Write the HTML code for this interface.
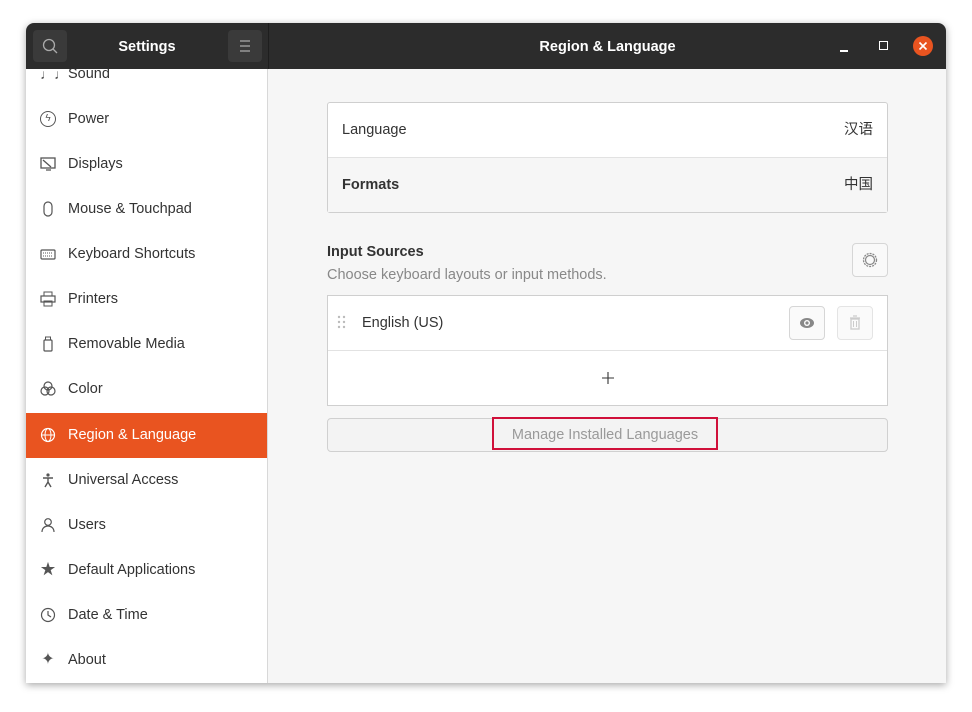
<!DOCTYPE html>
<html><head><meta charset="utf-8"><style>
*{box-sizing:border-box;margin:0;padding:0}
body{width:972px;height:712px;background:#fff;font-family:"Liberation Sans","Noto Sans CJK SC",sans-serif;font-size:14.5px;color:#333;position:relative;overflow:hidden}
.win{position:absolute;left:26px;top:23px;width:920px;height:660px;background:#f6f6f6;box-shadow:0 2px 8px rgba(0,0,0,.35);border-radius:8px 8px 0 0;overflow:hidden}
.hdr{position:absolute;left:0;top:0;width:920px;height:46px;background:#2c2c2c;color:#fff;font-weight:bold;font-size:14.5px}
.side{position:absolute;left:0;top:46px;width:242px;height:614px;background:#fff;border-right:1px solid #d8d8d8;overflow:hidden}
.row{position:absolute;left:0;width:242px;height:45px;line-height:45px;padding-left:42px;color:#333}
.row .ic{position:absolute;left:14px;top:14px;width:16px;height:16px;color:#555;font-size:14px;line-height:16px;text-align:center}
.sel{background:#e95420;color:#fff}
.sel .ic{color:#fff}
.box{position:absolute;background:#fff;border:1px solid #cfcfcf}
.btn{position:absolute;border:1px solid #d6d6d6;border-radius:4px;background:#f9f9f9}
.t{position:absolute;line-height:18px;height:18px}
</style></head><body>
<div class="win">
<div class="hdr">
 <div style="position:absolute;left:7px;top:7px;width:34px;height:32px;background:#3a3a3a;border-radius:4px"><svg width="34" height="32"><circle cx="16" cy="15" r="5.5" fill="none" stroke="#aaa" stroke-width="1.3"/><line x1="20" y1="19" x2="24" y2="23" stroke="#aaa" stroke-width="1.3"/></svg></div>
 <div style="position:absolute;left:0;width:242px;text-align:center;top:16px">Settings</div>
 <div style="position:absolute;left:202px;top:7px;width:34px;height:32px;background:#3a3a3a;border-radius:4px"><svg width="34" height="32"><path d="M12 11h10M12 16h10M12 21h10" stroke="#aaa" stroke-width="1.2"/></svg></div>
 <div style="position:absolute;left:242px;top:0;width:1px;height:46px;background:#1e1e1e"></div>
 <div style="position:absolute;left:243px;width:677px;text-align:center;top:16px">Region &amp; Language</div>
 <div style="position:absolute;left:814px;top:27px;width:8px;height:1.5px;background:#fff"></div>
 <div style="position:absolute;left:853px;top:18px;width:9px;height:9px;border:1.5px solid #fff"></div>
 <div style="position:absolute;left:887px;top:13px;width:20px;height:20px;border-radius:50%;background:#e95420"><svg width="20" height="20"><path d="M6.5 6.5l7 7M13.5 6.5l-7 7" stroke="#fff" stroke-width="1.6"/></svg></div>
</div>
<div class="side">
 <div class="row" style="top:-17px"><span class="ic">♩♩</span>Sound</div>
 <div class="row" style="top:28px"><span class="ic" style="border:1.3px solid #555;border-radius:50%;font-size:10px;line-height:13px">ϟ</span>Power</div>
 <div class="row" style="top:73px"><span class="ic"><svg width="16" height="16"><rect x="1" y="2" width="14" height="10" fill="none" stroke="#555" stroke-width="1.3"/><path d="M3 4l8 7M6 14h5" stroke="#555" stroke-width="1.3"/></svg></span>Displays</div>
 <div class="row" style="top:118px"><span class="ic"><svg width="16" height="16"><rect x="4" y="1" width="8" height="14" rx="4" fill="none" stroke="#555" stroke-width="1.2"/></svg></span>Mouse &amp; Touchpad</div>
 <div class="row" style="top:163px"><span class="ic"><svg width="16" height="16"><rect x="1" y="4" width="14" height="9" rx="1" fill="none" stroke="#555" stroke-width="1.2"/><path d="M3 7h10M3 10h10" stroke="#555" stroke-dasharray="1 1"/></svg></span>Keyboard Shortcuts</div>
 <div class="row" style="top:208px"><span class="ic"><svg width="16" height="16"><rect x="4" y="1" width="8" height="4" fill="none" stroke="#555"/><rect x="1" y="5" width="14" height="6" fill="none" stroke="#555" stroke-width="1.2"/><rect x="4" y="10" width="8" height="5" fill="none" stroke="#555"/></svg></span>Printers</div>
 <div class="row" style="top:253px"><span class="ic"><svg width="16" height="16"><rect x="4" y="4" width="8" height="11" rx="1" fill="none" stroke="#555" stroke-width="1.2"/><rect x="5.5" y="1" width="5" height="3" fill="none" stroke="#555"/></svg></span>Removable Media</div>
 <div class="row" style="top:298px"><span class="ic"><svg width="16" height="16"><circle cx="5" cy="10" r="4" fill="none" stroke="#555" stroke-width="1.2"/><circle cx="11" cy="10" r="4" fill="none" stroke="#555" stroke-width="1.2"/><circle cx="8" cy="5" r="4" fill="none" stroke="#555" stroke-width="1.2"/></svg></span>Color</div>
 <div class="row sel" style="top:344px"><span class="ic"><svg width="16" height="16"><circle cx="8" cy="8" r="6.5" fill="none" stroke="#fff" stroke-width="1.2"/><ellipse cx="8" cy="8" rx="3" ry="6.5" fill="none" stroke="#fff"/><path d="M1.5 8h13" stroke="#fff"/></svg></span>Region &amp; Language</div>
 <div class="row" style="top:389px"><span class="ic"><svg width="16" height="16"><circle cx="8" cy="3" r="1.6" fill="#555"/><path d="M3 6h10M8 6v4M8 10l-3 5M8 10l3 5" stroke="#555" stroke-width="1.4" fill="none"/></svg></span>Universal Access</div>
 <div class="row" style="top:434px"><span class="ic"><svg width="16" height="16"><circle cx="8" cy="5" r="3.3" fill="none" stroke="#555" stroke-width="1.2"/><path d="M2 15c0-4 3-6 6-6s6 2 6 6" fill="none" stroke="#555" stroke-width="1.2"/></svg></span>Users</div>
 <div class="row" style="top:479px"><span class="ic" style="font-size:15px">★</span>Default Applications</div>
 <div class="row" style="top:524px"><span class="ic"><svg width="16" height="16"><circle cx="8" cy="8" r="6.5" fill="none" stroke="#555" stroke-width="1.2"/><path d="M8 4v4l3 2" fill="none" stroke="#555" stroke-width="1.2"/></svg></span>Date &amp; Time</div>
 <div class="row" style="top:569px"><span class="ic" style="font-size:16px">✦</span>About</div>
</div>
<div class="box" style="left:301px;top:79px;width:561px;height:111px;border-radius:3px">
 <div class="t" style="left:14px;top:18px">Language</div><div class="t" style="right:14px;top:18px">汉语</div>
 <div style="position:absolute;left:0;top:54px;width:559px;height:55px;background:#f6f6f6;border-top:1px solid #e2e2e2"></div>
 <div class="t" style="left:14px;top:73px;font-weight:bold">Formats</div><div class="t" style="right:14px;top:73px">中国</div>
</div>
<div style="position:absolute;left:301px;top:221px;font-weight:bold">Input Sources</div>
<div style="position:absolute;left:301px;top:244px;color:#888">Choose keyboard layouts or input methods.</div>
<div class="btn" style="left:826px;top:220px;width:36px;height:34px"><svg width="34" height="32"><circle cx="17" cy="16" r="6.5" fill="none" stroke="#888" stroke-width="1.3" stroke-dasharray="2 1"/><circle cx="17" cy="16" r="4.5" fill="none" stroke="#888" stroke-width="1.2"/></svg></div>
<div class="box" style="left:301px;top:272px;width:561px;height:111px">
 <svg style="position:absolute;left:8px;top:19px" width="12" height="16"><g fill="#bbb"><circle cx="3" cy="2" r="1.2"/><circle cx="8" cy="2" r="1.2"/><circle cx="3" cy="7" r="1.2"/><circle cx="8" cy="7" r="1.2"/><circle cx="3" cy="12" r="1.2"/><circle cx="8" cy="12" r="1.2"/></g></svg>
 <div style="position:absolute;left:34px;top:19px">English (US)</div>
 <div class="btn" style="left:461px;top:10px;width:36px;height:34px;background:#fafafa"><svg width="34" height="32"><ellipse cx="17" cy="16" rx="7" ry="5" fill="#888"/><circle cx="17" cy="16" r="3" fill="#fff"/><circle cx="17" cy="16" r="1.6" fill="#888"/></svg></div>
 <div class="btn" style="left:509px;top:10px;width:36px;height:34px;background:#fafafa;border-color:#e4e4e4"><svg width="34" height="32"><path d="M12 11h10M15 9h4" stroke="#ccc" stroke-width="1.3"/><rect x="13" y="12" width="8" height="10" fill="none" stroke="#ccc" stroke-width="1.3"/><path d="M15.5 14v6M18.5 14v6" stroke="#ccc"/></svg></div>
 <div style="position:absolute;left:0;top:54px;width:559px;height:1px;background:#e2e2e2"></div>
 <svg style="position:absolute;left:274px;top:76px" width="12" height="12"><path d="M6 0v12M0 6h12" stroke="#333" stroke-width="1.1"/></svg>
</div>
<div class="btn" style="left:301px;top:395px;width:561px;height:34px;background:#f3f3f3;border-color:#d0d0d0"></div>
<div style="position:absolute;left:466px;top:394px;width:226px;height:33px;border:2px solid #d0103a;text-align:center;line-height:33px;color:#9a9a9a">Manage Installed Languages</div>
</div>
</body></html>
